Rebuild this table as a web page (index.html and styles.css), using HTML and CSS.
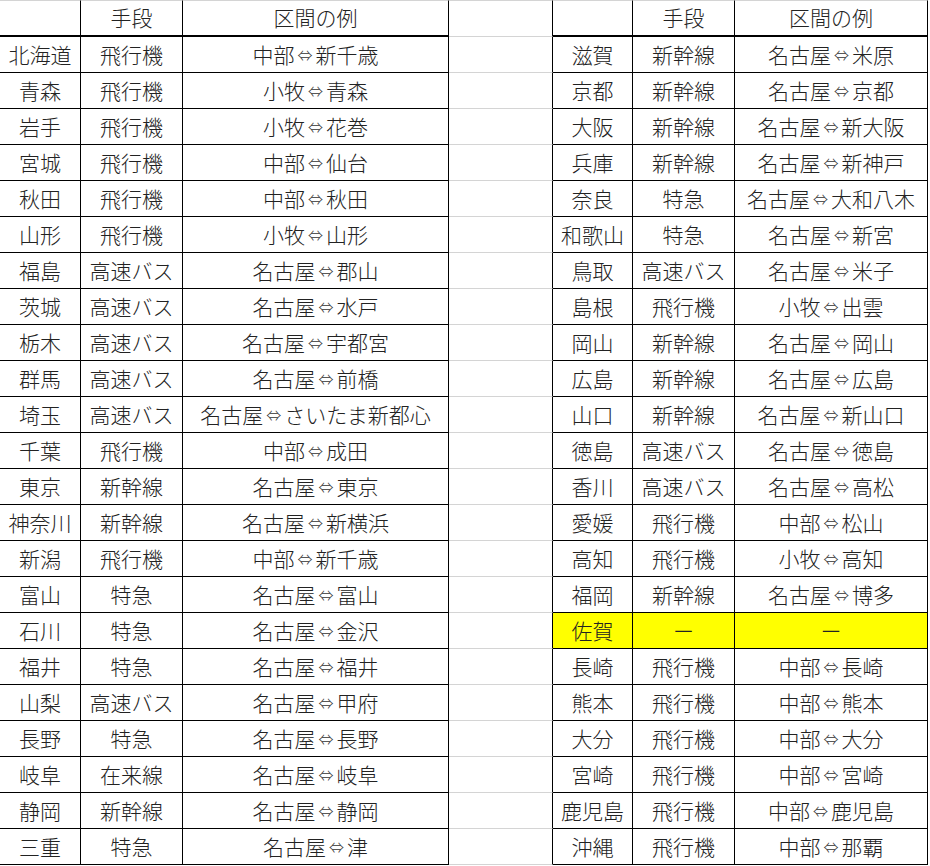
FILE: index.html
```html
<!DOCTYPE html>
<html lang="ja">
<head>
<meta charset="utf-8">
<title>都道府県別 移動手段</title>
<link rel="stylesheet" href="styles.css">
</head>
<body>
<div class="sheet">
<div class="c h top"></div><div class="c h top">手段</div><div class="c h top">区間の例</div><div class="c gap top"></div><div class="c h top"></div><div class="c h top">手段</div><div class="c h top">区間の例</div>
<div class="c">北海道</div><div class="c">飛行機</div><div class="c">中部<span class="arr">⇔</span>新千歳</div><div class="c gap"></div><div class="c">滋賀</div><div class="c">新幹線</div><div class="c">名古屋<span class="arr">⇔</span>米原</div>
<div class="c">青森</div><div class="c">飛行機</div><div class="c">小牧<span class="arr">⇔</span>青森</div><div class="c gap"></div><div class="c">京都</div><div class="c">新幹線</div><div class="c">名古屋<span class="arr">⇔</span>京都</div>
<div class="c">岩手</div><div class="c">飛行機</div><div class="c">小牧<span class="arr">⇔</span>花巻</div><div class="c gap"></div><div class="c">大阪</div><div class="c">新幹線</div><div class="c">名古屋<span class="arr">⇔</span>新大阪</div>
<div class="c">宮城</div><div class="c">飛行機</div><div class="c">中部<span class="arr">⇔</span>仙台</div><div class="c gap"></div><div class="c">兵庫</div><div class="c">新幹線</div><div class="c">名古屋<span class="arr">⇔</span>新神戸</div>
<div class="c">秋田</div><div class="c">飛行機</div><div class="c">中部<span class="arr">⇔</span>秋田</div><div class="c gap"></div><div class="c">奈良</div><div class="c">特急</div><div class="c">名古屋<span class="arr">⇔</span>大和八木</div>
<div class="c">山形</div><div class="c">飛行機</div><div class="c">小牧<span class="arr">⇔</span>山形</div><div class="c gap"></div><div class="c">和歌山</div><div class="c">特急</div><div class="c">名古屋<span class="arr">⇔</span>新宮</div>
<div class="c">福島</div><div class="c">高速バス</div><div class="c">名古屋<span class="arr">⇔</span>郡山</div><div class="c gap"></div><div class="c">鳥取</div><div class="c">高速バス</div><div class="c">名古屋<span class="arr">⇔</span>米子</div>
<div class="c">茨城</div><div class="c">高速バス</div><div class="c">名古屋<span class="arr">⇔</span>水戸</div><div class="c gap"></div><div class="c">島根</div><div class="c">飛行機</div><div class="c">小牧<span class="arr">⇔</span>出雲</div>
<div class="c">栃木</div><div class="c">高速バス</div><div class="c">名古屋<span class="arr">⇔</span>宇都宮</div><div class="c gap"></div><div class="c">岡山</div><div class="c">新幹線</div><div class="c">名古屋<span class="arr">⇔</span>岡山</div>
<div class="c">群馬</div><div class="c">高速バス</div><div class="c">名古屋<span class="arr">⇔</span>前橋</div><div class="c gap"></div><div class="c">広島</div><div class="c">新幹線</div><div class="c">名古屋<span class="arr">⇔</span>広島</div>
<div class="c">埼玉</div><div class="c">高速バス</div><div class="c">名古屋<span class="arr">⇔</span>さいたま新都心</div><div class="c gap"></div><div class="c">山口</div><div class="c">新幹線</div><div class="c">名古屋<span class="arr">⇔</span>新山口</div>
<div class="c">千葉</div><div class="c">飛行機</div><div class="c">中部<span class="arr">⇔</span>成田</div><div class="c gap"></div><div class="c">徳島</div><div class="c">高速バス</div><div class="c">名古屋<span class="arr">⇔</span>徳島</div>
<div class="c">東京</div><div class="c">新幹線</div><div class="c">名古屋<span class="arr">⇔</span>東京</div><div class="c gap"></div><div class="c">香川</div><div class="c">高速バス</div><div class="c">名古屋<span class="arr">⇔</span>高松</div>
<div class="c">神奈川</div><div class="c">新幹線</div><div class="c">名古屋<span class="arr">⇔</span>新横浜</div><div class="c gap"></div><div class="c">愛媛</div><div class="c">飛行機</div><div class="c">中部<span class="arr">⇔</span>松山</div>
<div class="c">新潟</div><div class="c">飛行機</div><div class="c">中部<span class="arr">⇔</span>新千歳</div><div class="c gap"></div><div class="c">高知</div><div class="c">飛行機</div><div class="c">小牧<span class="arr">⇔</span>高知</div>
<div class="c">富山</div><div class="c">特急</div><div class="c">名古屋<span class="arr">⇔</span>富山</div><div class="c gap"></div><div class="c">福岡</div><div class="c">新幹線</div><div class="c">名古屋<span class="arr">⇔</span>博多</div>
<div class="c">石川</div><div class="c">特急</div><div class="c">名古屋<span class="arr">⇔</span>金沢</div><div class="c gap"></div><div class="c mark">佐賀</div><div class="c mark">ー</div><div class="c mark">ー</div>
<div class="c">福井</div><div class="c">特急</div><div class="c">名古屋<span class="arr">⇔</span>福井</div><div class="c gap"></div><div class="c">長崎</div><div class="c">飛行機</div><div class="c">中部<span class="arr">⇔</span>長崎</div>
<div class="c">山梨</div><div class="c">高速バス</div><div class="c">名古屋<span class="arr">⇔</span>甲府</div><div class="c gap"></div><div class="c">熊本</div><div class="c">飛行機</div><div class="c">中部<span class="arr">⇔</span>熊本</div>
<div class="c">長野</div><div class="c">特急</div><div class="c">名古屋<span class="arr">⇔</span>長野</div><div class="c gap"></div><div class="c">大分</div><div class="c">飛行機</div><div class="c">中部<span class="arr">⇔</span>大分</div>
<div class="c">岐阜</div><div class="c">在来線</div><div class="c">名古屋<span class="arr">⇔</span>岐阜</div><div class="c gap"></div><div class="c">宮崎</div><div class="c">飛行機</div><div class="c">中部<span class="arr">⇔</span>宮崎</div>
<div class="c">静岡</div><div class="c">新幹線</div><div class="c">名古屋<span class="arr">⇔</span>静岡</div><div class="c gap"></div><div class="c">鹿児島</div><div class="c">飛行機</div><div class="c">中部<span class="arr">⇔</span>鹿児島</div>
<div class="c">三重</div><div class="c">特急</div><div class="c">名古屋<span class="arr">⇔</span>津</div><div class="c gap"></div><div class="c">沖縄</div><div class="c">飛行機</div><div class="c">中部<span class="arr">⇔</span>那覇</div>
</div>
</body>
</html>
```
FILE: styles.css
```css
html, body {
  margin: 0;
  padding: 0;
  background: #ffffff;
}

.sheet {
  display: grid;
  grid-template-columns: 81px 102px 266px 104px 80px 102px 193px;
  grid-template-rows: 37px;
  grid-auto-rows: 36px;
  width: 928px;
  font-family: "Noto Sans CJK JP", "Noto Sans", sans-serif;
  font-size: 21px;
  font-weight: 300;
  color: #222222;
}

.c {
  box-sizing: border-box;
  display: flex;
  align-items: center;
  justify-content: center;
  white-space: nowrap;
  border-right: 1px solid #000000;
  border-bottom: 1px solid #000000;
  line-height: 1;
  padding-bottom: 1px;
}

.arr {
  font-size: 15px;
  margin: 0 3px;
  color: #333333;
}

.top {
  border-top: 1px solid #d4d4d4;
}

.h {
  border-bottom: 2px solid #000000;
}

.gap {
  border-bottom: 1px solid #d4d4d4;
}

.mark {
  background: #ffff00;
}
```
